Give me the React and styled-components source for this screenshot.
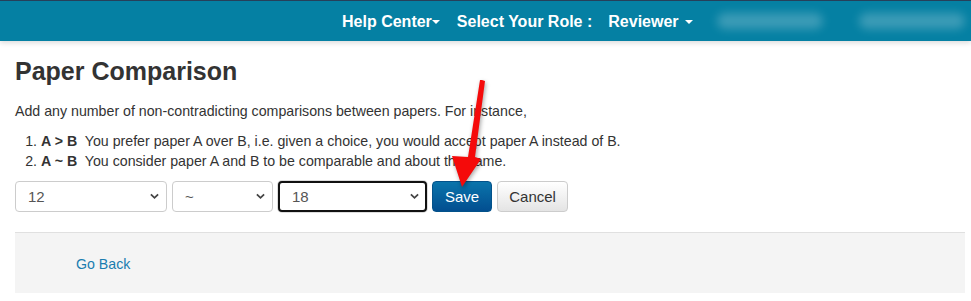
import React, { useState } from 'react';
import styled, { createGlobalStyle } from 'styled-components';

const GlobalStyle = createGlobalStyle`
  html, body {
    margin: 0;
    padding: 0;
    background: #fff;
    font-family: "Liberation Sans", Arial, sans-serif;
    color: #333;
  }
`

function Select({ value, options, width, focused, onChange }) {
  return (
    <SelectWrap width={width}>
      <SelectBox value={value} focused={focused} onChange={e => onChange(e.target.value)}>
        {options.map(o => <option key={o} value={o}>{o}</option>)}
      </SelectBox>
      <Chevron viewBox="0 0 10 7">
        <path d="M1 1.2 L5 5 L9 1.2" fill="none" stroke="#444" strokeWidth="2" />
      </Chevron>
    </SelectWrap>
  )
}

function App() {
  const [left, setLeft] = useState('12')
  const [op, setOp] = useState('~')
  const [right, setRight] = useState('18')

  return (
    <Page>
      <GlobalStyle />
      <Header>
        <NavItem space={17}>Help Center<Caret /></NavItem>
        <NavItem space={16}>Select Your Role :</NavItem>
        <NavItem space={24}>Reviewer <Caret gap /></NavItem>
        <Blurred space={36} />
        <Blurred space={6} />
      </Header>

      <Main>
        <Title>Paper Comparison</Title>
        <Intro>Add any number of non-contradicting comparisons between papers. For instance,</Intro>
        <Rules>
          <li><b>A &gt; B</b>&nbsp; You prefer paper A over B, i.e. given a choice, you would accept paper A instead of B.</li>
          <li><b>A ~ B</b>&nbsp; You consider paper A and B to be comparable and about the same.</li>
        </Rules>

        <FormRow>
          <Select value={left} options={['12', '14', '18']} width={152} onChange={setLeft} />
          <Select value={op} options={['>', '~', '<']} width={101} onChange={setOp} />
          <Select value={right} options={['12', '14', '18']} width={149} focused onChange={setRight} />
          <Button primary>Save</Button>
          <Button>Cancel</Button>
        </FormRow>

        <Footer>
          <BackLink href="#">Go Back</BackLink>
        </Footer>
      </Main>

      <Arrow viewBox="0 0 60 130">
        <polygon points="30,1 33,2 23,78 29,80 10,108 0,77 16,78 28,1" fill="#f50a0a" />
      </Arrow>
    </Page>
  )
}

const Page = styled.div`
  position: relative;
  width: 971px;
  min-height: 301px;
  overflow: hidden;
`

const Header = styled.div`
  height: 40px;
  border-top: 1px solid #26405a;
  background: #0580a3;
  box-shadow: 0 2px 5px rgba(0, 0, 0, 0.14);
  display: flex;
  align-items: center;
  justify-content: flex-end;
`

const NavItem = styled.a`
  display: flex;
  align-items: center;
  white-space: pre;
  color: #fff;
  font-size: 16px;
  font-weight: bold;
  margin-right: ${p => p.space}px;
  padding-top: 1px;
  cursor: pointer;
`

const Caret = styled.span`
  display: inline-block;
  width: 0;
  height: 0;
  margin-left: ${p => (p.gap ? 2 : 0)}px;
  border-left: 4px solid transparent;
  border-right: 4px solid transparent;
  border-top: 4px solid #fff;
`

const Blurred = styled.div`
  width: 106px;
  height: 16px;
  margin-right: ${p => p.space}px;
  background: rgba(255, 255, 255, 0.22);
  border-radius: 8px;
  filter: blur(5px);
`

const Main = styled.div`
  padding: 0 6px 0 15px;
`

const Title = styled.h1`
  margin: 17px 0 0;
  font-size: 25px;
  line-height: 26px;
  font-weight: bold;
  color: #333;
`

const Intro = styled.p`
  margin: 17px 0 0;
  font-size: 14.2px;
  line-height: 20px;
`

const Rules = styled.ol`
  margin: 10px 0 0;
  padding-left: 26px;
  font-size: 14.2px;
  line-height: 20px;

  b {
    font-weight: bold;
  }
`

const FormRow = styled.div`
  display: flex;
  align-items: center;
  gap: 5px;
  margin-top: 10px;
`

const SelectWrap = styled.div`
  position: relative;
  width: ${p => p.width}px;
  height: 31px;
`

const SelectBox = styled.select`
  appearance: none;
  width: 100%;
  height: 100%;
  box-sizing: border-box;
  padding: 0 24px 0 12px;
  font-family: "Liberation Sans", Arial, sans-serif;
  font-size: 15px;
  color: #555;
  background: #fff;
  border: ${p => (p.focused ? '2px solid #111' : '1px solid #ccc')};
  border-radius: 4px;
  box-shadow: ${p => (p.focused ? '0 0 0 1px #ddd' : 'none')};
  outline: none;
`

const Chevron = styled.svg`
  position: absolute;
  right: 8px;
  top: 12px;
  width: 9px;
  height: 7px;
  pointer-events: none;
`

const Button = styled.button`
  height: 31px;
  box-sizing: border-box;
  padding: 0 ${p => (p.primary ? 12 : 11)}px;
  font-family: "Liberation Sans", Arial, sans-serif;
  font-size: 15px;
  border-radius: 4px;
  cursor: pointer;
  color: ${p => (p.primary ? '#fff' : '#333')};
  border: 1px solid ${p => (p.primary ? '#03528a' : '#ccc')};
  background: ${p => (p.primary
    ? 'linear-gradient(#0a74ab, #024e90)'
    : 'linear-gradient(#fff, #e4e4e4)')};
`

const Footer = styled.div`
  margin-top: 20px;
  height: 60px;
  border-top: 1px solid #e0e0e0;
  background: #f4f4f4;
  display: flex;
  align-items: center;
  padding-left: 61px;
`

const BackLink = styled.a`
  font-size: 14.2px;
  color: #1a7db0;
  text-decoration: none;
  margin-top: 2px;
`

const Arrow = styled.svg`
  position: absolute;
  left: 452px;
  top: 79px;
  width: 60px;
  height: 130px;
  filter: drop-shadow(1px 2px 2px rgba(0, 0, 0, 0.35));
`

export default App
